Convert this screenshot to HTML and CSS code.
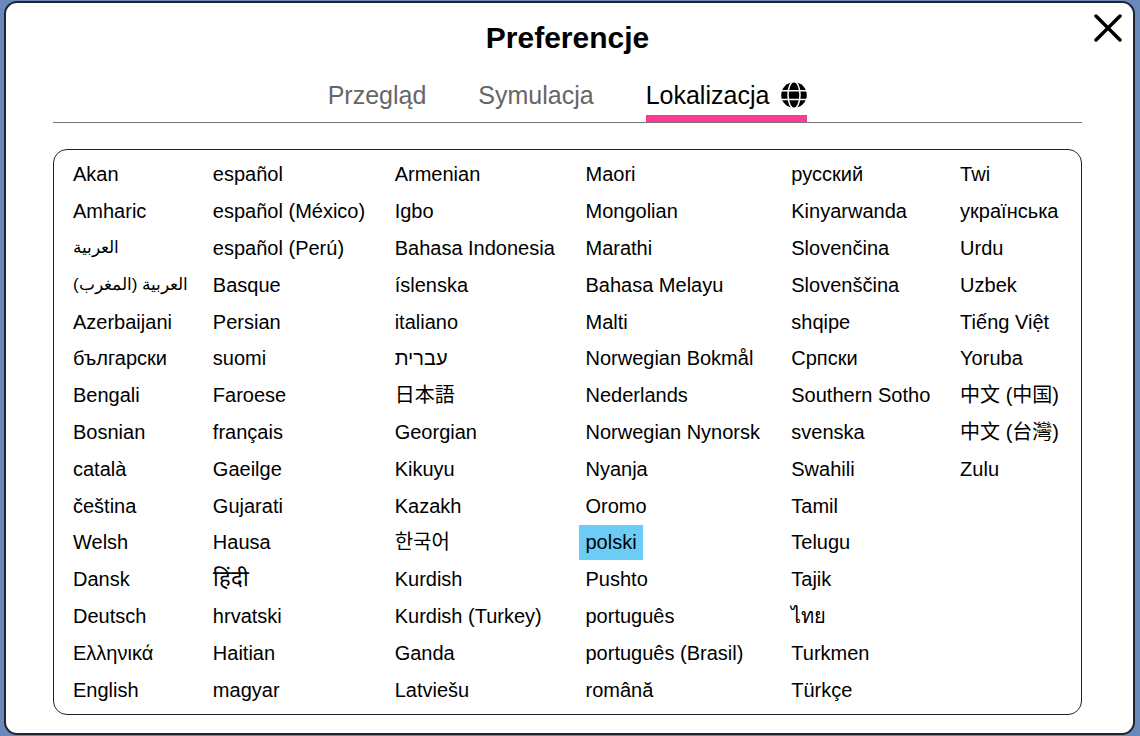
FILE: index.html
```html
<!DOCTYPE html>
<html lang="pl">
<head>
<meta charset="utf-8">
<meta name="viewport" content="width=device-width, initial-scale=1">
<title>Preferencje</title>
<link rel="stylesheet" href="styles.css">
</head>
<body>
<main class="dialog" role="dialog" aria-labelledby="title">
  <button class="close" type="button" aria-label="Zamknij">
    <svg viewBox="0 0 28 28" width="28" height="28" aria-hidden="true"><path d="M2 2L26 26M26 2L2 26" fill="none" stroke="#000" stroke-width="3.5" stroke-linecap="round"/></svg>
  </button>
  <h1 class="title" id="title">Preferencje</h1>
  <div class="tabs" role="tablist">
    <button class="tab" type="button" role="tab" aria-selected="false">Przegląd</button>
    <button class="tab" type="button" role="tab" aria-selected="false">Symulacja</button>
    <button class="tab tab-active" type="button" role="tab" aria-selected="true">Lokalizacja
      <svg class="globe" viewBox="0 0 26 26" width="26" height="26" aria-hidden="true">
        <circle cx="13" cy="13" r="12.8" fill="#000"/>
        <g fill="none" stroke="#fff" stroke-width="1.5"><ellipse cx="13" cy="13" rx="6" ry="13.4"/><path d="M0 8.7H26M0 17.6H26"/></g>
      </svg>
    </button>
  </div>
  <section class="panel" role="tabpanel" aria-label="Lokalizacja">
    <div class="column">
      <button class="lang" type="button">Akan</button>
      <button class="lang" type="button">Amharic</button>
      <button class="lang lang-arabic" type="button" lang="ar" dir="rtl">العربية</button>
      <button class="lang lang-arabic" type="button" lang="ar" dir="rtl">العربية (المغرب)</button>
      <button class="lang" type="button">Azerbaijani</button>
      <button class="lang" type="button">български</button>
      <button class="lang" type="button">Bengali</button>
      <button class="lang" type="button">Bosnian</button>
      <button class="lang" type="button">català</button>
      <button class="lang" type="button">čeština</button>
      <button class="lang" type="button">Welsh</button>
      <button class="lang" type="button">Dansk</button>
      <button class="lang" type="button">Deutsch</button>
      <button class="lang" type="button">Ελληνικά</button>
      <button class="lang" type="button">English</button>
    </div>
    <div class="column">
      <button class="lang" type="button">español</button>
      <button class="lang" type="button">español (México)</button>
      <button class="lang" type="button">español (Perú)</button>
      <button class="lang" type="button">Basque</button>
      <button class="lang" type="button">Persian</button>
      <button class="lang" type="button">suomi</button>
      <button class="lang" type="button">Faroese</button>
      <button class="lang" type="button">français</button>
      <button class="lang" type="button">Gaeilge</button>
      <button class="lang" type="button">Gujarati</button>
      <button class="lang" type="button">Hausa</button>
      <button class="lang lang-hindi" type="button" lang="hi">हिंदी</button>
      <button class="lang" type="button">hrvatski</button>
      <button class="lang" type="button">Haitian</button>
      <button class="lang" type="button">magyar</button>
    </div>
    <div class="column">
      <button class="lang" type="button">Armenian</button>
      <button class="lang" type="button">Igbo</button>
      <button class="lang" type="button">Bahasa Indonesia</button>
      <button class="lang" type="button">íslenska</button>
      <button class="lang" type="button">italiano</button>
      <button class="lang" type="button" lang="he" dir="rtl">עברית</button>
      <button class="lang" type="button" lang="ja">日本語</button>
      <button class="lang" type="button">Georgian</button>
      <button class="lang" type="button">Kikuyu</button>
      <button class="lang" type="button">Kazakh</button>
      <button class="lang" type="button" lang="ko">한국어</button>
      <button class="lang" type="button">Kurdish</button>
      <button class="lang" type="button">Kurdish (Turkey)</button>
      <button class="lang" type="button">Ganda</button>
      <button class="lang" type="button">Latviešu</button>
    </div>
    <div class="column">
      <button class="lang" type="button">Maori</button>
      <button class="lang" type="button">Mongolian</button>
      <button class="lang" type="button">Marathi</button>
      <button class="lang" type="button">Bahasa Melayu</button>
      <button class="lang" type="button">Malti</button>
      <button class="lang" type="button">Norwegian Bokmål</button>
      <button class="lang" type="button">Nederlands</button>
      <button class="lang" type="button">Norwegian Nynorsk</button>
      <button class="lang" type="button">Nyanja</button>
      <button class="lang" type="button">Oromo</button>
      <button class="lang lang-selected" type="button" aria-pressed="true">polski</button>
      <button class="lang" type="button">Pushto</button>
      <button class="lang" type="button">português</button>
      <button class="lang" type="button">português (Brasil)</button>
      <button class="lang" type="button">română</button>
    </div>
    <div class="column">
      <button class="lang" type="button">русский</button>
      <button class="lang" type="button">Kinyarwanda</button>
      <button class="lang" type="button">Slovenčina</button>
      <button class="lang" type="button">Slovenščina</button>
      <button class="lang" type="button">shqipe</button>
      <button class="lang" type="button">Српски</button>
      <button class="lang" type="button">Southern Sotho</button>
      <button class="lang" type="button">svenska</button>
      <button class="lang" type="button">Swahili</button>
      <button class="lang" type="button">Tamil</button>
      <button class="lang" type="button">Telugu</button>
      <button class="lang" type="button">Tajik</button>
      <button class="lang" type="button" lang="th">ไทย</button>
      <button class="lang" type="button">Turkmen</button>
      <button class="lang" type="button">Türkçe</button>
    </div>
    <div class="column">
      <button class="lang" type="button">Twi</button>
      <button class="lang" type="button">українська</button>
      <button class="lang" type="button">Urdu</button>
      <button class="lang" type="button">Uzbek</button>
      <button class="lang" type="button">Tiếng Việt</button>
      <button class="lang" type="button">Yoruba</button>
      <button class="lang" type="button" lang="zh-CN">中文 (中国)</button>
      <button class="lang" type="button" lang="zh-TW">中文 (台灣)</button>
      <button class="lang" type="button">Zulu</button>
    </div>
  </section>
</main>
</body>
</html>
```
FILE: styles.css
```css
* {
  box-sizing: border-box;
}

body {
  display: flex;
  min-height: 100vh;
  margin: 0;
  padding: 1px 5px 1px 4px;
  background: #6b88ba;
  color: #000;
  font-family: "Liberation Sans", Arial, "Noto Sans CJK SC", sans-serif;
}

button {
  margin: 0;
  padding: 0;
  border: 0;
  background: none;
  color: inherit;
  font: inherit;
  cursor: pointer;
}

.dialog {
  position: relative;
  display: flex;
  flex: 1;
  flex-direction: column;
  padding: 18px 51px 18px 47px;
  border: 2px solid #1f2530;
  border-radius: 13px;
  background: #fff;
}

.close {
  position: absolute;
  top: 11px;
  right: 11px;
  display: flex;
}

.title {
  margin: 0;
  font-size: 30px;
  line-height: 34px;
  text-align: center;
}

.tabs {
  display: flex;
  justify-content: center;
  gap: 52px;
  margin-top: 20px;
  border-bottom: 1px solid #777;
}

.tab {
  display: flex;
  align-items: center;
  gap: 12px;
  padding: 4px 0;
  border-bottom: 7px solid transparent;
  color: #666;
  font-size: 25px;
  line-height: 32px;
}

.tab-active {
  border-bottom-color: #fc3a92;
  color: #000;
}

.panel {
  display: grid;
  flex: 1;
  grid-template-columns:
    minmax(0, 140fr) minmax(0, 182fr) minmax(0, 191fr)
    minmax(0, 206fr) minmax(0, 169fr) minmax(0, 114fr);
  margin-top: 26px;
  padding: 7px 13px;
  border: 1px solid #222;
  border-radius: 14px;
}

.column {
  display: grid;
  grid-template-rows: repeat(15, 1fr);
  row-gap: 2px;
  justify-items: start;
}

.lang {
  min-height: 30px;
  padding: 0 6px;
  font-size: 20px;
  line-height: 30px;
  white-space: nowrap;
}

.lang-arabic {
  font-size: 17px;
}

.lang-hindi {
  font-size: 22px;
}

.lang-selected {
  background: #6bcdf5;
}
```
